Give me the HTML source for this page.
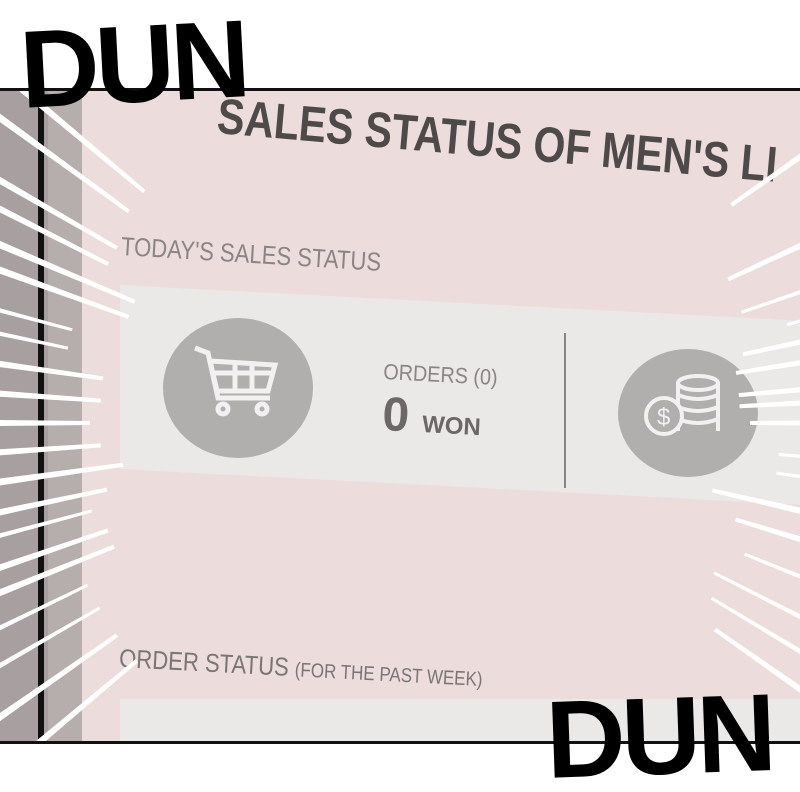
<!DOCTYPE html>
<html><head><meta charset="utf-8"><style>
html,body{margin:0;width:800px;height:792px;overflow:hidden}
body{background:#fff;position:relative;font-family:"Liberation Sans",sans-serif}
.panel{position:absolute;left:0;top:88px;width:800px;height:656px;background:#eddcdc;overflow:hidden;border-top:3px solid #111;border-bottom:3px solid #111;box-sizing:border-box}
.s1{position:absolute;left:0;top:0;width:48px;height:100%;background:#a8a0a0}
.s2{position:absolute;left:48px;top:0;width:34px;height:100%;background:#b6adad}
.bl{position:absolute;left:38px;top:0;width:6px;height:100%;background:#111}
.t{position:absolute;color:#555;white-space:nowrap}
.card{position:absolute;left:120px;top:194px;width:700px;height:184px;background:#ebe8e8;transform:skewY(3deg);transform-origin:0 0}
.circ{position:absolute;border-radius:50%;background:#b1aeae}
.dun{position:absolute;font-family:"Liberation Sans",sans-serif;font-weight:bold;font-size:110px;color:#000;letter-spacing:-4px;line-height:1}
</style></head><body>
<div class="panel">
<div class="s1"></div><div class="s2"></div><div class="bl"></div>
<div class="t" style="left:220px;top:-4px;font-size:50px;font-weight:bold;color:#4e4a4a;transform:rotate(5deg) scaleX(.82);transform-origin:0 0">SALES STATUS OF MEN'S LI</div>
<div class="t" style="left:122px;top:140px;font-size:26px;color:#8a8585;transform:rotate(3.5deg) scaleX(.85);transform-origin:0 0">TODAY'S SALES STATUS</div>
<div class="card"></div>
<div style="position:absolute;left:564px;top:242px;width:2px;height:155px;background:#8a8686"></div>
<div class="circ" style="left:163px;top:227px;width:150px;height:140px"></div>
<svg style="position:absolute;left:190px;top:252px" width="90" height="80" viewBox="0 0 90 80" fill="none" stroke="#f2f0f0" stroke-width="5"><path d="M5 5 L18 10 L28 55 L80 55"/><path d="M20 18 L85 22 L78 48 L27 48 Z M25 30 H82 M45 20 V48 M62 20 V48"/><circle cx="33" cy="66" r="5"/><circle cx="72" cy="66" r="5"/></svg>
<div class="t" style="left:384px;top:268px;font-size:22px;color:#8a8585;transform:rotate(3deg) scaleX(.9);transform-origin:0 0">ORDERS (0)</div>
<div class="t" style="left:384px;top:296px;font-size:48px;font-weight:bold;color:#6c6868;transform:rotate(3deg);transform-origin:0 0">0 <span style="font-size:24px">WON</span></div>
<div class="circ" style="left:618px;top:258px;width:140px;height:128px"></div>
<svg style="position:absolute;left:640px;top:280px" width="90" height="80" viewBox="0 0 90 80" fill="none" stroke="#f2f0f0" stroke-width="4"><ellipse cx="58" cy="12" rx="20" ry="7"/><path d="M38 12 V60 M78 12 V60 M38 24 Q58 32 78 24 M38 36 Q58 44 78 36 M38 48 Q58 56 78 48"/><circle cx="24" cy="45" r="18" fill="#b1aeae"/><text x="17" y="54" font-size="24" fill="#f2f0f0" stroke="none" font-family="Liberation Sans">$</text></svg>
<div class="t" style="left:120px;top:552px;font-size:26px;color:#7a7575;transform:rotate(3deg) scaleX(.85);transform-origin:0 0">ORDER STATUS <span style="font-size:20px">(FOR THE PAST WEEK)</span></div>
<div style="position:absolute;left:120px;top:608px;width:700px;height:60px;background:#ebe8e8"></div>
<svg style="position:absolute;left:0;top:-88px" width="800" height="792">
<g transform="translate(420,420)" fill="#fff">
<polygon points="330,-2 800,-7 800,7 330,2" transform="rotate(0)"/>
<polygon points="360,-1.5 800,-5 800,5 360,1.5" transform="rotate(5)"/>
<polygon points="360,-1.5 800,-5 800,5 360,1.5" transform="rotate(8)"/>
<polygon points="300,-2 800,-8 800,8 300,2" transform="rotate(13)"/>
<polygon points="330,-2 800,-8 800,8 330,2" transform="rotate(17)"/>
<polygon points="350,-1.5 800,-5 800,5 350,1.5" transform="rotate(22)"/>
<polygon points="330,-1.5 800,-5 800,5 330,1.5" transform="rotate(27)"/>
<polygon points="340,-1.5 800,-5 800,5 340,1.5" transform="rotate(31)"/>
<polygon points="320,-2 800,-7 800,7 320,2" transform="rotate(-3)"/>
<polygon points="320,-2 800,-7 800,7 320,2" transform="rotate(-5)"/>
<polygon points="320,-2 800,-7 800,7 320,2" transform="rotate(-9)"/>
<polygon points="330,-2 800,-7 800,7 330,2" transform="rotate(-12)"/>
<polygon points="380,-1.5 800,-5 800,5 380,1.5" transform="rotate(-15)"/>
<polygon points="340,-1.5 800,-5 800,5 340,1.5" transform="rotate(-19)"/>
<polygon points="340,-2 800,-7 800,7 340,2" transform="rotate(-25)"/>
<polygon points="330,-2 800,-7 800,7 330,2" transform="rotate(180)"/>
<polygon points="300,-2 800,-8 800,8 300,2" transform="rotate(172)"/>
<polygon points="340,-1.5 800,-5 800,5 340,1.5" transform="rotate(165)"/>
<polygon points="320,-2 800,-7 800,7 320,2" transform="rotate(168)"/>
<polygon points="320,-2 800,-7 800,7 320,2" transform="rotate(176)"/>
<polygon points="320,-2 800,-7 800,7 320,2" transform="rotate(184)"/>
<polygon points="320,-2 800,-7 800,7 320,2" transform="rotate(188)"/>
<polygon points="360,-1.5 800,-5 800,5 360,1.5" transform="rotate(192)"/>
<polygon points="360,-1.5 800,-5 800,5 360,1.5" transform="rotate(195)"/>
<polygon points="310,-2 800,-7 800,7 310,2" transform="rotate(200)"/>
<polygon points="310,-2 800,-7 800,7 310,2" transform="rotate(203)"/>
<polygon points="350,-2 800,-6 800,6 350,2" transform="rotate(207)"/>
<polygon points="350,-2 800,-6 800,6 350,2" transform="rotate(210)"/>
<polygon points="330,-2 800,-7 800,7 330,2" transform="rotate(158)"/>
<polygon points="330,-2 800,-7 800,7 330,2" transform="rotate(161)"/>
<polygon points="370,-1.5 800,-5 800,5 370,1.5" transform="rotate(150)"/>
<polygon points="370,-1.5 800,-5 800,5 370,1.5" transform="rotate(154)"/>
<polygon points="360,-2 800,-6 800,6 360,2" transform="rotate(35)"/>
<polygon points="380,-2 800,-6 800,6 380,2" transform="rotate(-35)"/>
<polygon points="370,-2 800,-6 800,6 370,2" transform="rotate(140)"/>
<polygon points="370,-2 800,-6 800,6 370,2" transform="rotate(145)"/>
<polygon points="360,-2 800,-6 800,6 360,2" transform="rotate(216)"/>
<polygon points="360,-2 800,-6 800,6 360,2" transform="rotate(220)"/>
</g></svg>
</div>
<div class="dun" style="left:20px;top:10px;transform:rotate(-3deg)">DUN</div>
<div class="dun" style="left:546px;top:682px;transform:rotate(-2deg)">DUN</div>
</body></html>
